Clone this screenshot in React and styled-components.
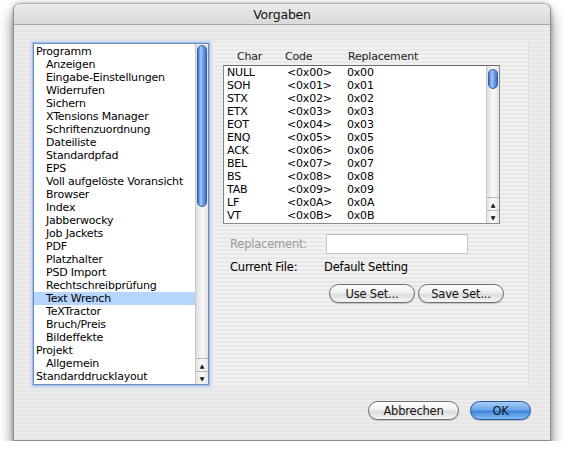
import React from "react";
import styled, { createGlobalStyle } from "styled-components";

const GlobalStyle = createGlobalStyle`
  body {
    margin: 0;
    background: #ffffff;
    font-family: "DejaVu Sans", "Liberation Sans", sans-serif;
    color: #000;
  }
`;

const sections = [
  { label: "Programm", level: 0 },
  { label: "Anzeigen", level: 1 },
  { label: "Eingabe-Einstellungen", level: 1 },
  { label: "Widerrufen", level: 1 },
  { label: "Sichern", level: 1 },
  { label: "XTensions Manager", level: 1 },
  { label: "Schriftenzuordnung", level: 1 },
  { label: "Dateiliste", level: 1 },
  { label: "Standardpfad", level: 1 },
  { label: "EPS", level: 1 },
  { label: "Voll aufgelöste Voransicht", level: 1 },
  { label: "Browser", level: 1 },
  { label: "Index", level: 1 },
  { label: "Jabberwocky", level: 1 },
  { label: "Job Jackets", level: 1 },
  { label: "PDF", level: 1 },
  { label: "Platzhalter", level: 1 },
  { label: "PSD Import", level: 1 },
  { label: "Rechtschreibprüfung", level: 1 },
  { label: "Text Wrench", level: 1, selected: true },
  { label: "TeXTractor", level: 1 },
  { label: "Bruch/Preis", level: 1 },
  { label: "Bildeffekte", level: 1 },
  { label: "Projekt", level: 0 },
  { label: "Allgemein", level: 1 },
  { label: "Standarddrucklayout", level: 0 },
];

const chars = [
  ["NULL", "<0x00>", "0x00"],
  ["SOH", "<0x01>", "0x01"],
  ["STX", "<0x02>", "0x02"],
  ["ETX", "<0x03>", "0x03"],
  ["EOT", "<0x04>", "0x03"],
  ["ENQ", "<0x05>", "0x05"],
  ["ACK", "<0x06>", "0x06"],
  ["BEL", "<0x07>", "0x07"],
  ["BS", "<0x08>", "0x08"],
  ["TAB", "<0x09>", "0x09"],
  ["LF", "<0x0A>", "0x0A"],
  ["VT", "<0x0B>", "0x0B"],
];

const Window = styled.div`
  margin: 3px 0 0 13px;
  width: 538px;
  height: 438px;
  display: flex;
  flex-direction: column;
  border-radius: 7px 7px 0 0;
  border: 1px solid #8e8e8e;
  border-top-color: #b0b0b0;
  box-sizing: border-box;
  background: repeating-linear-gradient(
    180deg,
    #ececec 0px,
    #ececec 2px,
    #e6e6e6 2px,
    #e6e6e6 4px
  );
  box-shadow: 0 9px 14px rgba(0, 0, 0, 0.5), 0 0 4px rgba(0, 0, 0, 0.25);
  font-size: 11px;
  letter-spacing: -0.2px;
`;

const TitleBar = styled.div`
  height: 20px;
  flex: none;
  border-radius: 6px 6px 0 0;
  border-bottom: 1px solid #a3a3a3;
  background: linear-gradient(180deg, #ececec 0%, #e2e2e2 50%, #d9d9d9 100%);
  display: flex;
  align-items: center;
  justify-content: center;
  font-size: 12.5px;
  color: #111;
`;

const Body = styled.div`
  display: flex;
  gap: 4px;
  padding: 18px 0 0 19px;
  flex: none;
`;

const ListBox = styled.div`
  width: 176px;
  height: 342px;
  box-sizing: border-box;
  border: 1px solid #6d8cbb;
  box-shadow: 0 0 0 1px #a4c0e8, 0 0 3px 2px #bcd2ef;
  background: #fff;
  display: flex;
`;

const ListItems = styled.div`
  flex: 1;
  padding-top: 1px;
  overflow: hidden;
`;

const ListItem = styled.div`
  height: 13px;
  line-height: 13px;
  padding-left: ${(p) => (p.$level ? 12 : 2)}px;
  background: ${(p) => (p.$selected ? "#b5d5ff" : "transparent")};
  white-space: nowrap;
`;

const Track = styled.div`
  width: 12px;
  flex: none;
  display: flex;
  flex-direction: column;
  border-left: 1px solid #c8c8c8;
  background: linear-gradient(90deg, #dcdcdc, #f6f6f6 45%, #f6f6f6 60%, #e2e2e2);
`;

const Thumb = styled.div`
  margin: ${(p) => p.$top}px 1px 0 1px;
  height: ${(p) => p.$height}px;
  border-radius: 6px;
  border: 1px solid #2c5fb0;
  box-sizing: border-box;
  background: linear-gradient(
    90deg,
    #3f73c8 0%,
    #a4c8f4 35%,
    #7eaaee 55%,
    #3c71cc 100%
  );
`;

const TrackSpacer = styled.div`
  flex: 1;
`;

const Arrow = styled.div`
  height: 12px;
  border-top: 1px solid #b8b8b8;
  display: flex;
  align-items: center;
  justify-content: center;
  font-size: 6px;
  letter-spacing: 0;
  color: #111;
  background: linear-gradient(90deg, #e4e4e4, #fbfbfb 50%, #e8e8e8);
`;

const Pane = styled.div`
  width: 316px;
  height: 344px;
  box-sizing: border-box;
  border-right: 1px solid #dcdcdc;
  background: repeating-linear-gradient(
    180deg,
    #f1f1f1 0px,
    #f1f1f1 2px,
    #e8e8e8 2px,
    #e8e8e8 4px
  );
  padding: 7px 0 0 10px;
`;

const TableHeader = styled.div`
  display: grid;
  grid-template-columns: 48px 63px 1fr;
  padding-left: 14px;
  height: 13px;
  line-height: 13px;
  margin-bottom: 2px;
  color: #222;
`;

const TableBox = styled.div`
  width: 277px;
  height: 159px;
  box-sizing: border-box;
  border: 1px solid #8a8a8a;
  border-top-color: #6a6a6a;
  background: #fff;
  display: flex;
`;

const Rows = styled.div`
  flex: 1;
  padding-left: 3px;
`;

const Row = styled.div`
  display: grid;
  grid-template-columns: 60px 60px 1fr;
  height: 13px;
  line-height: 13px;
`;

const FieldRow = styled.div`
  display: flex;
  align-items: center;
  margin: 9px 0 0 7px;
  height: 21px;
`;

const FieldLabel = styled.span`
  width: ${(p) => p.$width}px;
  color: ${(p) => (p.$disabled ? "#9a9a9a" : "#000")};
  font-size: 11.5px;
`;

const TextInput = styled.div`
  width: 142px;
  height: 20px;
  box-sizing: border-box;
  border: 1px solid #c9c9c9;
  border-top-color: #b9b9b9;
  background: #fff;
`;

const InfoRow = styled.div`
  display: flex;
  align-items: center;
  margin: 6px 0 0 7px;
  height: 14px;
  font-size: 11.5px;
`;

const ButtonRow = styled.div`
  display: flex;
  gap: ${(p) => p.$gap}px;
  margin: ${(p) => p.$margin};
`;

const Button = styled.div`
  width: ${(p) => p.$width}px;
  height: 19px;
  box-sizing: border-box;
  border-radius: 10px;
  border: 1px solid ${(p) => (p.$primary ? "#24549e" : "#6e6e6e")};
  display: flex;
  align-items: center;
  justify-content: center;
  font-size: 11.5px;
  color: #111;
  background: ${(p) =>
    p.$primary
      ? "linear-gradient(180deg, #a7cdf6 0%, #6aa6ea 45%, #3e86dc 55%, #84bdf3 100%)"
      : "linear-gradient(180deg, #fdfdfd 0%, #f0f0f0 45%, #dcdcdc 55%, #f5f5f5 100%)"};
  box-shadow: 0 1px 1px rgba(0, 0, 0, 0.2);
`;

const Footer = styled.div`
  flex: 1;
  display: flex;
  align-items: flex-start;
  justify-content: flex-end;
  padding: 14px 19px 0 0;
`;

const Scrollbar = ({ top, height }) => (
  <Track>
    <Thumb $top={top} $height={height} />
    <TrackSpacer />
    <Arrow>▲</Arrow>
    <Arrow>▼</Arrow>
  </Track>
);

export default function App() {
  return (
    <>
      <GlobalStyle />
      <Window>
        <TitleBar>Vorgaben</TitleBar>
        <Body>
          <ListBox>
            <ListItems>
              {sections.map((s) => (
                <ListItem key={s.label} $level={s.level} $selected={s.selected}>
                  {s.label}
                </ListItem>
              ))}
            </ListItems>
            <Scrollbar top={1} height={162} />
          </ListBox>
          <Pane>
            <TableHeader>
              <span>Char</span>
              <span>Code</span>
              <span>Replacement</span>
            </TableHeader>
            <TableBox>
              <Rows>
                {chars.map(([c, code, rep]) => (
                  <Row key={c}>
                    <span>{c}</span>
                    <span>{code}</span>
                    <span>{rep}</span>
                  </Row>
                ))}
              </Rows>
              <Scrollbar top={3} height={20} />
            </TableBox>
            <FieldRow>
              <FieldLabel $width={96} $disabled>
                Replacement:
              </FieldLabel>
              <TextInput />
            </FieldRow>
            <InfoRow>
              <FieldLabel $width={94}>Current File:</FieldLabel>
              <span>Default Setting</span>
            </InfoRow>
            <ButtonRow $gap={3} $margin="10px 0 0 106px">
              <Button $width={86}>Use Set...</Button>
              <Button $width={86}>Save Set...</Button>
            </ButtonRow>
          </Pane>
        </Body>
        <Footer>
          <ButtonRow $gap={11} $margin="0">
            <Button $width={91}>Abbrechen</Button>
            <Button $width={61} $primary>
              OK
            </Button>
          </ButtonRow>
        </Footer>
      </Window>
    </>
  );
}
